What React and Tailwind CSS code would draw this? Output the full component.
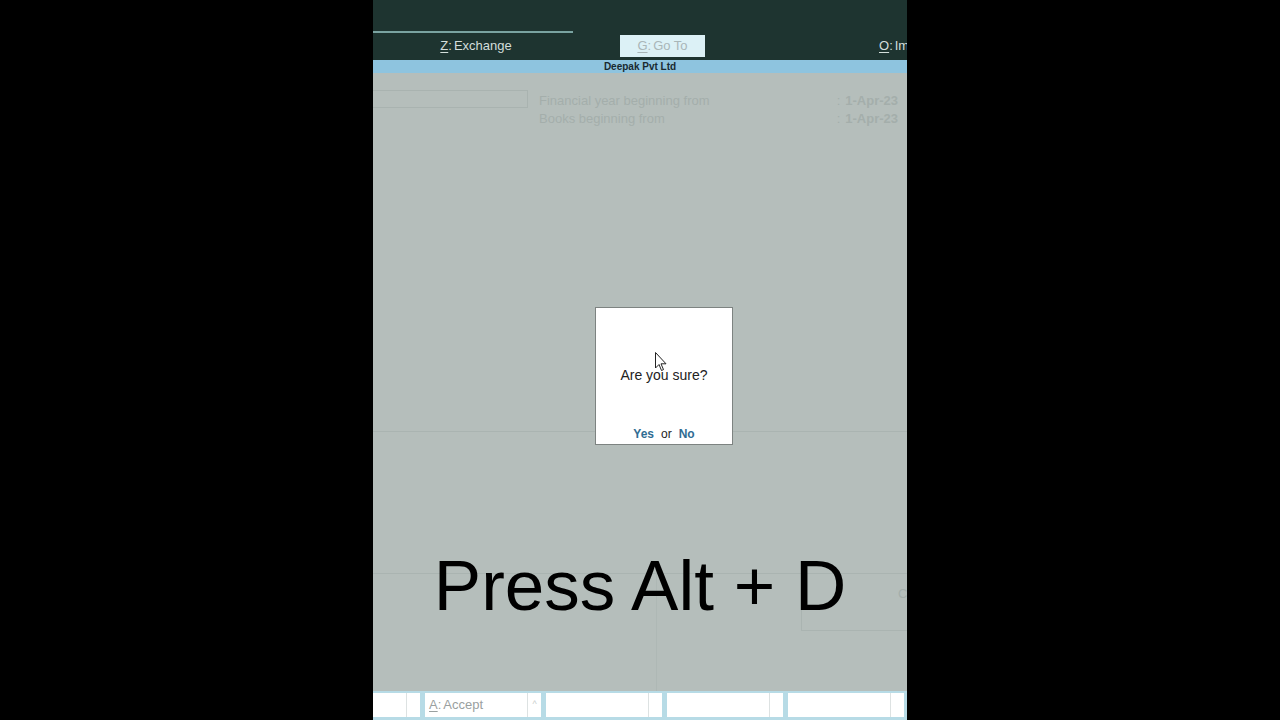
import React from "react";

const F = { fontFamily: '"Liberation Sans", Arial, sans-serif' };

function Cell({ children, first }) {
  return (
    <div className={`flex h-[24px] shrink-0 ${first ? "w-[47px]" : "w-[116px]"} bg-white`}>
      <div className="flex-1 flex items-center pl-[4px] text-[13px] text-[#9aa0a0] border-r border-[#dde2e2]">
        {children}
      </div>
      <div className="w-[13px] flex items-center justify-center text-[9px] text-[#c8cccc]">
        {children ? "^" : ""}
      </div>
    </div>
  );
}

export default function App() {
  return (
    <div className="w-[1280px] h-[720px] bg-black flex justify-center overflow-hidden" style={F}>
      <div className="relative w-[534px] shrink-0 h-[720px] flex flex-col overflow-hidden">
        {/* top dark bar */}
        <div className="h-[60px] shrink-0 bg-[#1e3430] flex flex-col">
          <div className="mt-[31px] w-[200px] h-[2px] bg-[#7aa3a1]" />
          <div className="mt-[2px] h-[22px] flex items-center">
            <div className="w-[206px] shrink-0 text-center text-[13px] text-[#d3dedb]">
              <span className="underline underline-offset-2">Z</span>:<span className="ml-[2px]">Exchange</span>
            </div>
            <div className="ml-[41px] w-[85px] shrink-0 h-[22px] bg-[#dcf1f6] flex items-center justify-center text-[13px] text-[#a9b6b8]">
              <span className="underline underline-offset-2">G</span>:<span className="ml-[2px]">Go To</span>
            </div>
            <div className="ml-[174px] shrink-0 text-[13px] text-[#d3dedb] whitespace-nowrap">
              <span className="underline underline-offset-2">O</span>:<span className="ml-[2px]">Import</span>
            </div>
          </div>
        </div>
        {/* blue company bar */}
        <div className="h-[13px] shrink-0 bg-[#8ec4df] flex items-center justify-center text-[10px] font-bold text-[#1a2a30] leading-none">
          Deepak Pvt Ltd
        </div>
        {/* body */}
        <div className="flex-1 bg-[#b5bebb] flex flex-col">
          <div className="h-[358px] flex pt-[17px]">
            <div className="w-[155px] h-[18px] border border-[#a9b3b0] border-l-0" />
            <div className="ml-[11px] flex-1 pr-[9px] text-[13px] text-[#a4aeab] leading-[18px] mt-[2px]">
              <div className="flex justify-between">
                <span>Financial year beginning from</span>
                <span className="font-bold">
                  <span className="font-normal mr-[5px]">:</span>1-Apr-23
                </span>
              </div>
              <div className="flex justify-between">
                <span>Books beginning from</span>
                <span className="font-bold">
                  <span className="font-normal mr-[5px]">:</span>1-Apr-23
                </span>
              </div>
            </div>
          </div>
          <div className="h-[142px] border-t border-[#aab4b1]" />
          <div className="flex-1 border-t border-[#aab4b1] flex">
            <div className="w-[284px] border-r border-[#aeb8b5]" />
            <div className="flex-1 flex justify-end">
              <div className="w-[106px] h-[57px] border-l border-b border-[#aab4b1] text-[13px] text-[#a4aeab] pt-[10px] pl-[96px]">
                C
              </div>
            </div>
          </div>
        </div>
        {/* bottom bar */}
        <div className="h-[29px] shrink-0 bg-[#b7dbe6] flex items-start pt-[2px] gap-[5px]">
          <Cell first />
          <Cell>
            <span className="underline underline-offset-2">A</span>:<span className="ml-[2px]">Accept</span>
          </Cell>
          <Cell />
          <Cell />
          <Cell />
        </div>

        {/* dialog overlay */}
        <div className="absolute left-[222px] top-[307px] w-[138px] h-[138px] bg-white border border-[#7d8381] flex flex-col items-center">
          <div className="mt-[60px] text-[14px] text-[#222] leading-none">Are you sure?</div>
          <div className="mt-[46px] text-[12px] leading-none flex items-baseline gap-[7px]">
            <span className="font-bold text-[#2f6d93]">Yes</span>
            <span className="text-[#222]">or</span>
            <span className="font-bold text-[#2f6d93]">No</span>
          </div>
        </div>

        {/* mouse cursor */}
        <svg className="absolute left-[282px] top-[352px]" width="13" height="20" viewBox="0 0 13 20">
          <path d="M0.5 0.5 L0.5 16 L4 12.5 L6.5 18.5 L8.5 17.6 L6 11.8 L11 11.8 Z" fill="white" stroke="#222" strokeWidth="1" />
        </svg>

        {/* caption */}
        <div className="absolute left-0 right-0 top-[550px] text-center text-[71px] leading-none text-black">
          Press Alt + D
        </div>
      </div>
    </div>
  );
}
